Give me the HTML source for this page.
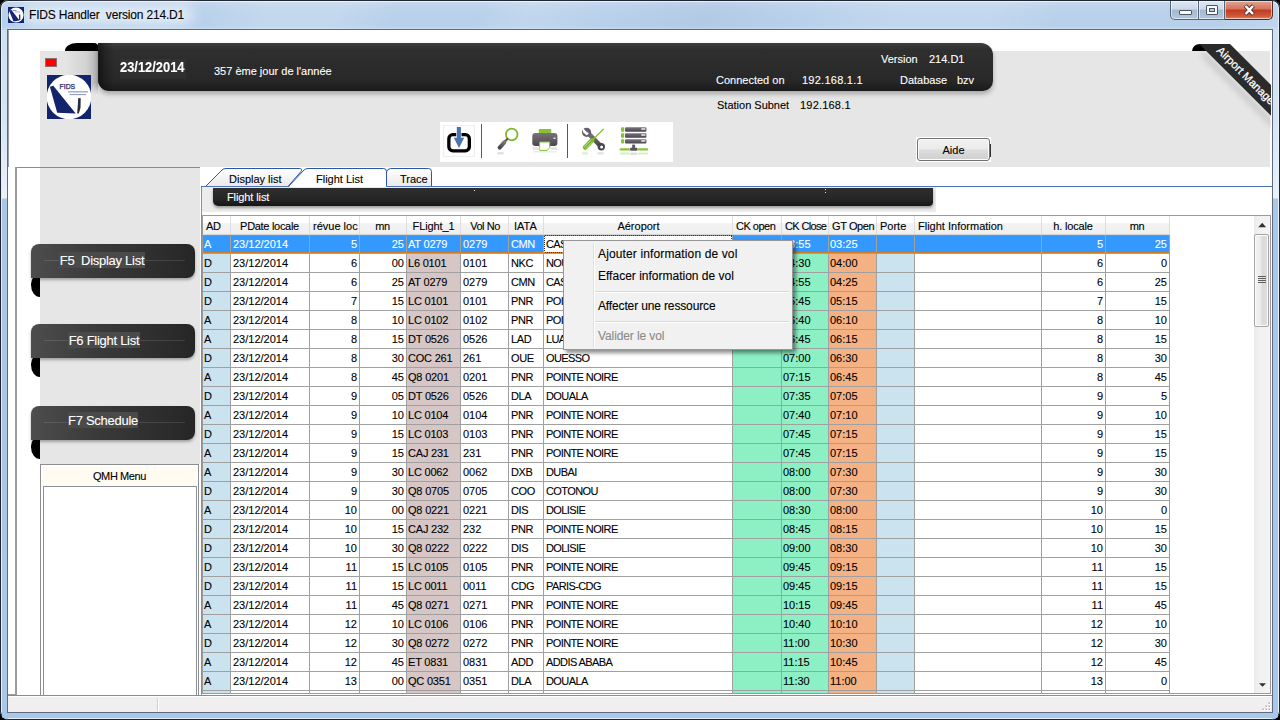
<!DOCTYPE html>
<html lang="fr">
<head>
<meta charset="utf-8">
<title>FIDS Handler version 214.D1</title>
<style>
*{box-sizing:border-box;margin:0;padding:0}
html,body{width:1280px;height:720px;overflow:hidden;background:#000}
body{font-family:"Liberation Sans",sans-serif;font-size:11px;color:#000;position:relative;-webkit-text-stroke:.1px currentColor}
.abs{position:absolute}
#frame{position:absolute;left:0;top:0;width:1280px;height:720px;border-radius:8px 8px 9px 9px;
 background:
  linear-gradient(115deg,rgba(255,255,255,0) 0,rgba(255,255,255,0) 13%,rgba(255,255,255,.16) 17%,rgba(255,255,255,.16) 21%,rgba(255,255,255,0) 25%,rgba(255,255,255,0) 30%,rgba(255,255,255,.13) 33%,rgba(255,255,255,0) 38%,rgba(0,0,40,.03) 44%,rgba(255,255,255,0) 50%,rgba(255,255,255,.14) 56%,rgba(255,255,255,.14) 62%,rgba(255,255,255,0) 66%,rgba(255,255,255,0) 76%,rgba(255,255,255,.16) 82%,rgba(255,255,255,.22) 100%),
  linear-gradient(180deg,#c9dcf0 0,#bdd4ec 6px,#b9d1ea 14px,#b7d0ea 26px,#c6daef 29px,#b9d1ea 30px);
 box-shadow:inset 0 0 0 1px #1e2630, inset 0 0 0 2px rgba(255,255,255,.6);overflow:hidden}
#frame .side{position:absolute;top:30px;bottom:1px;width:6px;background:linear-gradient(180deg,#cfe0f3 0,#d6e5f5 90px,#e9f1fa 166px,#e9f1fa 168px,#a9c8e9 169px,#a9c8e9 100%)}
#frame .bot{position:absolute;left:2px;right:2px;top:713px;height:5px;background:#a9c8e9}
#glow{position:absolute;left:22px;top:6px;width:172px;height:18px;background:#fff;opacity:.62;filter:blur(7px);border-radius:9px}
#clientborder{position:absolute;left:7px;top:29px;width:1266px;height:684px;background:#5d6b7c;border:0}
#client{position:absolute;left:8px;top:30px;width:1264px;height:682px;background:#fff;overflow:hidden}
#title{position:absolute;left:29px;top:7px;font-size:12px;letter-spacing:-.18px;line-height:16px;color:#000;white-space:pre;}
/* coordinates inside #client are page coords minus (8,30): we use a wrapper shifted */
#pg{position:absolute;left:-8px;top:-30px;width:1280px;height:720px}
.ribbon{background:linear-gradient(180deg,#3e3e3e 0,#2f2f2f 14%,#2b2b2b 50%,#282828 78%,#1a1a1a 100%);color:#fff}
.t{position:absolute;white-space:pre;line-height:13px}
.w{color:#fff}
/* grid */
#grid{position:absolute;left:202px;top:215px;width:1069px;height:479px;border:1px solid #9a9a9a;background:#fff;overflow:hidden}
.ghead{position:absolute;left:0;top:0;width:967px;height:19px;background:linear-gradient(180deg,#fff 0,#fff 36%,#f3f3f3 42%,#efefef 100%);border-bottom:1px solid #d5d5d5}
.hc{position:absolute;top:0;height:18px;line-height:21px;white-space:pre;overflow:visible;border-right:0;padding:0 2px 0 3px}
.hc.hm{text-align:center}
.hc::after{content:"";position:absolute;right:-1px;top:0;width:1px;height:18px;background:#dedede}
.gr{position:absolute;left:0;width:967px;height:19px}
.c{position:absolute;top:0;height:19px;line-height:18px;white-space:pre;overflow:hidden;padding:0 2px;box-shadow:1px 0 0 #a0a0a0,0 1px 0 #a0a0a0,1px 1px 0 #a0a0a0;height:18px}
.c.r{text-align:right;padding-right:2px}
.gr.sel .c{background:#3399ff;color:#fff}
.gr.sel .c.foc{background:#fff;color:#000}
.gr.sel::before,.gr.sel::after{content:"";position:absolute;left:0;width:966px;height:0;border-top:1px dotted #d8822a;z-index:2}
.gr.sel::before{top:0}.gr.sel::after{top:17px}
.gr.sel .c.foc{outline:1px dotted #333;outline-offset:-1px}

.lbtn{left:31px;width:164px;height:34px;border-radius:8px 8px 8px 0;background:linear-gradient(90deg,#4d4d4d 0,#3a3a3a 40%,#262626 100%);box-shadow:0 2px 3px rgba(0,0,0,.3)}
.lbtn i{position:absolute;left:13px;right:10px;top:16px;height:1px;background:rgba(255,255,255,.12)}
.lbtn span{position:absolute;top:8px;height:16px;line-height:18px;font-size:13px;letter-spacing:-.27px;color:#fff;white-space:pre;background:#4a4a4a;text-align:center;overflow:visible}
.mi{font-size:12px;line-height:15px;color:#000}

#capbtns{position:absolute;left:1170px;top:1px;width:103px;height:19px}
.cb{position:absolute;top:0;height:19px;border:1px solid #566477;border-top:0;background:linear-gradient(180deg,#dfe8f3 0,#cbd9e9 45%,#a5b9d1 50%,#b3c6dc 100%);box-shadow:inset 0 0 0 1px rgba(255,255,255,.55)}
.cb+.cb{border-left:0}
.cb b{position:absolute;background:#f8fafc;border:1px solid #4a5566;border-radius:1px}
.cb u{position:absolute;left:10px;top:7px;width:6px;height:4px;border:1px solid #4a5566;background:#b7c9de}
.cb.close{background:linear-gradient(180deg,#e3a392 0,#d3735c 45%,#c13a22 50%,#cf5b3c 85%,#dd8a6a 100%);border-color:#5a2a24}
</style>
</head>
<body>
<div id="frame">
  <div id="glow"></div><div class="side" style="left:2px"></div><div class="side" style="right:2px"></div><div class="bot"></div>
</div>
<svg class="abs" style="left:8px;top:7px" width="16" height="16" viewBox="0 0 16 16">
 <rect width="16" height="16" fill="#14247a"/><circle cx="8" cy="8" r="7.600" fill="#fff"/>
 <path d="M1 3.500 L3.500 3 L11.500 13.500 L5.500 14.500 Z" fill="#14247a"/>
 <rect x="11" y="7.500" width="1.300" height="5.500" fill="#333"/>
 <rect x="4.500" y="3" width="4" height="1" fill="#8a90bc"/><rect x="7" y="4.500" width="5" height="1" fill="#aab0d0"/>
</svg>
<div id="title">FIDS Handler  version 214.D1</div>
<div id="capbtns">
 <div class="cb" style="left:0;width:29px;border-radius:0 0 0 5px"><b style="left:8px;top:9px;width:13px;height:5px"></b></div>
 <div class="cb" style="left:29px;width:26px"><b style="left:7px;top:4px;width:12px;height:10px"></b><u></u></div>
 <div class="cb close" style="left:55px;width:48px;border-radius:0 0 5px 0">
  <svg width="46" height="18" viewBox="0 0 46 18" style="position:absolute;left:1px;top:0"><g stroke-linecap="butt"><path d="M19.300 4.600 L27.300 13.400 M27.300 4.600 L19.300 13.400" stroke="#4e3030" stroke-width="4.200" fill="none"/><path d="M19.600 5 L27 13 M27 5 L19.600 13" stroke="#fff" stroke-width="2.500" fill="none"/></g></svg>
 </div>
</div>
<div id="clientborder"></div>
<div id="client"><div id="pg">
<!-- thin left edge line -->
<div class="abs" style="left:8px;top:30px;width:1px;height:137px;background:#9aa0a8"></div>
<!-- header gray panel -->
<div class="abs" style="left:40px;top:51px;width:1230px;height:116px;background:#e6e6e6"></div>
<div class="abs" style="left:40px;top:51px;width:58px;height:44px;background:linear-gradient(90deg,#e6e6e6 0,#e4e4e4 45%,#d2d2d2 80%,#b0b0b0 100%);-webkit-mask-image:linear-gradient(180deg,#000 0,#000 72%,transparent 100%);mask-image:linear-gradient(180deg,#000 0,#000 72%,transparent 100%)"></div>
<!-- left column gray -->
<div class="abs" style="left:40px;top:167px;width:160px;height:297px;background:#e6e6e6"></div>
<!-- left panel frame lines -->
<div class="abs" style="left:15px;top:167px;width:186px;height:1px;background:#8c8c8c"></div>
<div class="abs" style="left:15px;top:167px;width:2px;height:528px;background:#9c9c9c"></div>
<div class="abs" style="left:8px;top:694px;width:8px;height:1px;background:#9c9c9c"></div>

<!-- main ribbon fold -->
<div class="abs" style="left:65px;top:43px;width:34px;height:8px;background:#000;border-radius:12px 5px 0 0 / 8px 5px 0 0"></div>
<!-- main ribbon -->
<div class="abs ribbon" style="left:98px;top:43px;width:895px;height:48px;border-radius:0 12px 10px 11px;box-shadow:0 3px 5px rgba(0,0,0,.28), inset 1px 0 0 rgba(255,255,255,.06)"></div>
<div class="abs" style="left:98px;top:43px;width:16px;height:48px;border-radius:0 0 0 11px;background:linear-gradient(90deg,rgba(0,0,0,.55) 0,rgba(0,0,0,.25) 40%,rgba(0,0,0,0) 100%)"></div>
<div class="abs" style="left:120px;top:59px;width:66px;height:20px;background:rgba(255,255,255,.03)"></div>
<div class="t w" id="tdate" style="left:120px;top:59px;font-size:14px;font-weight:bold;line-height:16px;transform-origin:0 0;transform:scaleX(.92)">23/12/2014</div>
<div class="t w" id="tday" style="left:214px;top:65px;font-size:11px">357 ème jour de l'année</div>
<div class="t w" id="tver" style="left:881px;top:53px">Version</div>
<div class="t w" id="tvern" style="left:929px;top:53px">214.D1</div>
<div class="t w" id="tcon" style="left:716px;top:74px">Connected on</div>
<div class="t w" id="tip" style="letter-spacing:.25px;left:802px;top:74px">192.168.1.1</div>
<div class="t w" id="tdb" style="left:900px;top:74px">Database</div>
<div class="t w" id="tbzv" style="left:957px;top:74px">bzv</div>
<div class="t" id="tsub" style="left:717px;top:99px">Station Subnet</div>
<div class="t" id="tsubn" style="letter-spacing:.2px;left:800px;top:99px">192.168.1</div>

<!-- red indicator -->
<div class="abs" style="left:45px;top:58px;width:12px;height:9px;background:#ff0000;border:1px solid #8a7070"></div>
<!-- logo -->
<svg class="abs" style="left:47px;top:75px" width="44" height="44" viewBox="0 0 44 44">
 <rect width="44" height="44" fill="#12246b"/>
 <circle cx="22" cy="22" r="22.300" fill="#fff"/>
 <path d="M2.900 11.700 L6.300 10.700 L28.700 38.600 L10.200 37.700 Z" fill="#12246b"/>
 <path d="M31.300 23 L33.700 23.200 L33.500 33 L31.800 38.400 L30.200 38.400 Z" fill="#262c3c"/>
 <text x="12.600" y="13.800" font-family="Liberation Sans,sans-serif" font-size="7" fill="#12246b" stroke="#12246b" stroke-width=".25" textLength="15.600" lengthAdjust="spacingAndGlyphs">FIDS</text>
 <rect x="21" y="16.300" width="20" height="1.100" fill="#12246b" opacity=".5"/>
 <rect x="22.500" y="19" width="16.500" height="1.100" fill="#12246b" opacity=".45"/>
</svg>

<!-- Airport Manager corner ribbon -->
<svg class="abs" style="left:1180px;top:36px" width="91" height="140" viewBox="1180 36 91 140">
 <defs>
  <linearGradient id="amg" x1="0" y1="1" x2="1" y2="0">
   <stop offset="0" stop-color="#242424"/><stop offset=".45" stop-color="#2c2c2c"/><stop offset=".55" stop-color="#3a3a3a"/><stop offset="1" stop-color="#2a2a2a"/>
  </linearGradient>
  <filter id="ams" x="-30%" y="-30%" width="160%" height="160%"><feGaussianBlur stdDeviation="3"/></filter>
 </defs>
 <polygon points="1204,52 1280,128 1280,134 1201,55" fill="#000" opacity=".17" filter="url(#ams)"/>
 <path d="M1192 51 Q1193 44 1200 44 L1214 44 L1207 51 Z" fill="#000"/>
 <polygon points="1199.200,44 1230,44 1280,94 1280,124.800" fill="#2b2b2b"/>
 <text transform="translate(1216.100,51.300) rotate(45)" font-family="Liberation Sans,sans-serif" font-size="11.200" fill="#fff" stroke="#fff" stroke-width=".25">Airport Manager</text>
</svg>

<!-- toolbar -->
<div class="abs" style="left:440px;top:122px;width:233px;height:40px;background:#fff"></div>
<div class="abs" style="left:443px;top:125px;width:32px;height:32px;background:#fdfdfd;border:1px solid #eeeeee"></div>
<svg class="abs" style="left:440px;top:122px" width="233" height="40" viewBox="0 0 233 40">
 <defs>
  <linearGradient id="gg" x1="0" y1="0" x2="0" y2="1"><stop offset="0" stop-color="#7a737b"/><stop offset="1" stop-color="#4a454d"/></linearGradient>
  <linearGradient id="gf" x1="0" y1="0" x2="0" y2="1"><stop offset="0" stop-color="#8b858d"/><stop offset="1" stop-color="#5a555d"/></linearGradient>
 </defs>
 <!-- import icon -->
 <rect x="8.850" y="12.650" width="20.500" height="16.200" rx="4" fill="none" stroke="#000" stroke-width="3.300"/>
 <path d="M16.200 4.800 H21.500 V15.300 H24.800 L19 26.600 L13.200 15.300 H16.200 Z" fill="#fff"/>
 <path d="M16.800 5.100 H20.900 V15.800 H24.200 L19 26 L13.800 15.800 H16.800 Z" fill="#4a74ab"/>
 <!-- separators -->
 <rect x="41" y="2" width="1" height="34" fill="#5a5a5a"/>
 <rect x="127" y="2" width="1" height="34" fill="#5a5a5a"/>
 <!-- magnifier -->
 <circle cx="71.700" cy="12.500" r="5.800" fill="#fff" stroke="#7cb82f" stroke-width="1.800"/>
 <path d="M67.300 17 L63.500 21" stroke="#5a555d" stroke-width="2.200" stroke-linecap="round"/>
 <path d="M64.300 20.300 L59.600 25.600" stroke="url(#gg)" stroke-width="4" stroke-linecap="round"/>
 <ellipse cx="60.500" cy="31.300" rx="3.500" ry="1.200" fill="#e2e0e3"/>
 <!-- printer -->
 <rect x="98.800" y="7" width="12.500" height="5" rx="1" fill="#86c232"/>
 <rect x="92.300" y="11" width="25.100" height="13" rx="3" fill="url(#gg)"/>
 <path d="M99.600 20 H109.700 V25.800 L107 28.400 H99.600 Z" fill="#fff" stroke="#86c232" stroke-width="1"/>
 <rect x="113.500" y="15.500" width="2" height="1.500" fill="#e4e2e5"/>
 <rect x="92.500" y="25" width="7" height="3" fill="#e6e4e7"/><rect x="110.300" y="25" width="7" height="3" fill="#e6e4e7"/>
 <rect x="93" y="29" width="24" height="1.500" fill="#ecebed"/>
 <!-- tools -->
 <path d="M149 12 L160.500 23.800" stroke="url(#gg)" stroke-width="4.600" stroke-linecap="round"/>
 <circle cx="146.600" cy="10.300" r="4.600" fill="#66606a"/>
 <path d="M142.200 5.500 L148.600 11.700 L146.400 13.300 L143.300 10.200 Z" fill="#fff"/>
 <circle cx="147.400" cy="11.600" r="1" fill="#fff"/>
 <circle cx="161.300" cy="24.700" r="3.700" fill="#4a454d"/><circle cx="161.600" cy="24.900" r="1.500" fill="#fff"/>
 <path d="M163.300 7.200 L152.500 18" stroke="#86c232" stroke-width="1.300" stroke-linecap="round"/>
 <circle cx="152.300" cy="18.200" r="2.200" fill="#7cb82f"/>
 <path d="M151.500 19 L145.200 25.400" stroke="#7cb82f" stroke-width="4.800" stroke-linecap="round"/>
 <path d="M150.600 18.500 L144.300 24.800 M152.300 20.200 L146 26.500" stroke="#d5ecaf" stroke-width=".7"/>
 <ellipse cx="145" cy="31.300" rx="3.500" ry="1.300" fill="#e3f0cf"/><ellipse cx="160.500" cy="31.300" rx="3.500" ry="1.300" fill="#e4e2e5"/>
 <!-- server -->
 <rect x="185" y="5.300" width="21.400" height="4.400" rx="1" fill="url(#gg)"/>
 <rect x="185" y="11.300" width="21.400" height="4.400" rx="1" fill="url(#gg)"/>
 <rect x="185" y="17.200" width="21.400" height="4.400" rx="1" fill="url(#gg)"/>
 <rect x="181" y="5.300" width="3.200" height="4.400" rx="1" fill="#86c232"/><rect x="181" y="11.300" width="3.200" height="4.400" rx="1" fill="#86c232"/><rect x="181" y="17.200" width="3.200" height="4.400" rx="1" fill="#86c232"/>
 <rect x="201.300" y="6.200" width="4" height="1.600" fill="#e4e2e5"/><rect x="201.300" y="12.200" width="4" height="1.600" fill="#e4e2e5"/><rect x="201.300" y="18.100" width="4" height="1.600" fill="#e4e2e5"/>
 <rect x="192.200" y="22.600" width="2.900" height="4" fill="#5a555d"/>
 <rect x="190.100" y="25.800" width="7.400" height="3" rx=".8" fill="#5a555d"/>
 <rect x="179.600" y="26.200" width="10.300" height="2.400" rx="1.200" fill="#86c232"/><rect x="197.800" y="26.200" width="10.300" height="2.400" rx="1.200" fill="#86c232"/>
 <rect x="179.600" y="30.400" width="10.300" height="2" rx="1" fill="#dcedc2"/><rect x="197.800" y="30.400" width="10.300" height="2" rx="1" fill="#dcedc2"/><rect x="190.100" y="30.400" width="7.400" height="2.600" rx="1" fill="#e0dee2"/>
</svg>

<!-- Aide button -->
<div class="abs" style="left:916px;top:137px;width:75px;height:25px;background:#fff"></div>
<div class="abs" style="left:917px;top:138px;width:73px;height:23px;border:1px solid #707070;border-radius:3px;background:linear-gradient(180deg,#f2f2f2 0,#ebebeb 48%,#dddddd 52%,#cfcfcf 100%);box-shadow:inset 0 0 0 1px #fcfcfc;text-align:center;line-height:23px;font-size:11px">Aide</div>
<div class="abs" style="left:990px;top:144px;width:1px;height:13px;background:#333"></div>

<!-- left buttons -->
<div class="abs" style="left:31px;top:274px;width:9px;height:23px;background:#000;border-radius:9px 0 0 9px / 10px 0 0 12px"></div>
<div class="abs" style="left:31px;top:354px;width:9px;height:23px;background:#000;border-radius:9px 0 0 9px / 10px 0 0 12px"></div>
<div class="abs" style="left:31px;top:436px;width:9px;height:23px;background:#000;border-radius:9px 0 0 9px / 10px 0 0 12px"></div>
<div class="abs lbtn" style="top:244px"><i></i><span style="left:28px;width:86px">F5  Display List</span></div>
<div class="abs lbtn" style="top:324px"><i></i><span style="left:37px;width:72px">F6 Flight List</span></div>
<div class="abs lbtn" style="top:406px"><i></i><span style="left:37px;width:70px;top:6px">F7 Schedule</span></div>

<!-- QMH menu -->
<div class="abs" style="left:40px;top:464px;width:159px;height:231px;background:#fffbf0;border:1px solid #8e8e8e;border-bottom:0;box-shadow:inset 2px 2px 0 #fff, inset -2px 0 0 #fff"></div>
<div class="t" id="tqmh" style="left:40px;top:470px;width:159px;text-align:center;font-size:11px;letter-spacing:-.4px">QMH Menu</div>
<div class="abs" style="left:43px;top:486px;width:154px;height:209px;background:#fff;border:1px solid #8a909c;border-bottom:0"></div>

<!-- tabs -->
<svg class="abs" style="left:200px;top:166px" width="1072" height="24" viewBox="200 166 1072 24">
 <defs><linearGradient id="tg" x1="0" y1="0" x2="0" y2="1"><stop offset="0" stop-color="#ffffff"/><stop offset="1" stop-color="#e9e9e9"/></linearGradient></defs>
 <rect x="200" y="167" width="1072" height="20" fill="#fff"/>
 <path d="M205.500 186.500 L222 170 Q223.500 168.500 226 168.500 L299 168.500 Q303 168.500 301 171.500 L288 186.500 Z" fill="url(#tg)" stroke="#2a56b0" stroke-width="1"/>
 <path d="M386.500 186.500 L386.500 172 Q387 169 390.500 168.500 L428.500 168.500 Q431.500 168.500 431.500 171.500 L431.500 186.500 Z" fill="url(#tg)" stroke="#2a56b0" stroke-width="1"/>
 <rect x="201" y="186" width="1071" height="1" fill="#4f74b8"/>
 <path d="M288.500 187.500 L304 170 Q305.500 168.500 308 168.500 L383.500 168.500 Q386.500 168.500 386.500 171.500 L386.500 187.500 Z" fill="#fff"/>
 <path d="M288.500 186.500 L304 170 Q305.500 168.500 308 168.500 L383.500 168.500 Q386.500 168.500 386.500 171.500 L386.500 186.500" fill="none" stroke="#2a56b0" stroke-width="1"/>
</svg>
<div class="t" id="ttab1" style="left:229px;top:172px;font-size:11px;line-height:14px">Display list</div>
<div class="t" id="ttab2" style="left:316px;top:172px;font-size:11px;line-height:14px">Flight List</div>
<div class="t" id="ttab3" style="left:400px;top:172px;font-size:11px;line-height:14px">Trace</div>
<!-- tab page -->
<div class="abs" style="left:201px;top:187px;width:1px;height:508px;background:#8e8e8e"></div>
<div class="abs" style="left:202px;top:187px;width:734px;height:25px;background:#ececec"></div>
<div class="abs ribbon" style="left:213px;top:188px;width:720px;height:18px;border-radius:0 0 4px 5px;background:linear-gradient(180deg,#2e2e2e 0,#262626 60%,#161616 100%);box-shadow:0 2px 3px rgba(0,0,0,.35)"></div>
<div class="t w" id="tfl" style="left:227px;letter-spacing:-.1px;top:190px;font-size:11px;line-height:14px">Flight list</div>
<div class="abs" style="left:474px;top:190px;width:1px;height:1px;background:#ddd"></div>
<div class="abs" style="left:825px;top:189px;width:1px;height:1px;background:#ddd"></div><div class="abs" style="left:825px;top:192px;width:1px;height:1px;background:#ddd"></div>

<div id="grid">
<div class="ghead">
<div class="hc hl" style="left:0px;width:27px;letter-spacing:-0.30px;">AD</div>
<div class="hc hm" style="left:28px;width:78px;letter-spacing:-0.30px;padding-right:4.0px;">PDate locale</div>
<div class="hc hm" style="left:107px;width:49px;">révue loc</div>
<div class="hc hm" style="left:157px;width:46px;letter-spacing:-0.30px;padding-right:4.0px;">mn</div>
<div class="hc hm" style="left:204px;width:53px;letter-spacing:-0.12px;padding-right:3.0px;">FLight_1</div>
<div class="hc hm" style="left:258px;width:47px;letter-spacing:-0.45px;">Vol No</div>
<div class="hc hl" style="left:306px;width:34px;padding-left:5px;">IATA</div>
<div class="hc hm" style="left:341px;width:188px;">Aéroport</div>
<div class="hc hm" style="left:530px;width:48px;letter-spacing:-0.50px;padding-right:6.0px;">CK open</div>
<div class="hc hm" style="left:579px;width:46px;letter-spacing:-0.65px;">CK Close</div>
<div class="hc hm" style="left:626px;width:47px;letter-spacing:-0.40px;padding-right:3.4px;">GT Open</div>
<div class="hc hl" style="left:674px;width:37px;">Porte</div>
<div class="hc hl" style="left:712px;width:126px;">Flight Information</div>
<div class="hc hm" style="left:839px;width:63px;letter-spacing:-0.15px;padding-right:4.0px;">h. locale</div>
<div class="hc hm" style="left:903px;width:63px;letter-spacing:-0.30px;padding-right:4.0px;">mn</div>
</div>
<div class="gr sel" style="top:19px">
<div class="c l" style="left:0px;width:27px;padding-left:1px;">A</div>
<div class="c l" style="left:28px;width:78px;">23/12/2014</div>
<div class="c r" style="left:107px;width:49px;">5</div>
<div class="c r" style="left:157px;width:46px;">25</div>
<div class="c l" style="left:204px;width:53px;letter-spacing:-0.2px;padding-left:1px;">AT 0279</div>
<div class="c l" style="left:258px;width:47px;">0279</div>
<div class="c l" style="left:306px;width:34px;letter-spacing:-0.4px;">CMN</div>
<div class="c l foc" style="left:341px;width:188px;letter-spacing:-0.6px;">CASABLANCA</div>
<div class="c l" style="left:530px;width:48px;"></div>
<div class="c l" style="left:579px;width:46px;padding-left:1px;">03:55</div>
<div class="c l" style="left:626px;width:47px;padding-left:1px;">03:25</div>
<div class="c l" style="left:674px;width:37px;"></div>
<div class="c l" style="left:712px;width:126px;"></div>
<div class="c r" style="left:839px;width:63px;">5</div>
<div class="c r" style="left:903px;width:63px;">25</div>
</div>
<div class="gr" style="top:38px">
<div class="c l" style="left:0px;width:27px;padding-left:1px;background:#cbe3ee;">D</div>
<div class="c l" style="left:28px;width:78px;">23/12/2014</div>
<div class="c r" style="left:107px;width:49px;">6</div>
<div class="c r" style="left:157px;width:46px;">00</div>
<div class="c l" style="left:204px;width:53px;letter-spacing:-0.2px;padding-left:1px;background:#d6c6c6;">L6 0101</div>
<div class="c l" style="left:258px;width:47px;">0101</div>
<div class="c l" style="left:306px;width:34px;letter-spacing:-0.4px;">NKC</div>
<div class="c l" style="left:341px;width:188px;letter-spacing:-0.6px;">NOUAKCHOTT</div>
<div class="c l" style="left:530px;width:48px;background:#8df0c5;"></div>
<div class="c l" style="left:579px;width:46px;padding-left:1px;background:#8df0c5;">04:30</div>
<div class="c l" style="left:626px;width:47px;padding-left:1px;background:#f4b183;">04:00</div>
<div class="c l" style="left:674px;width:37px;background:#cbe3ee;"></div>
<div class="c l" style="left:712px;width:126px;"></div>
<div class="c r" style="left:839px;width:63px;">6</div>
<div class="c r" style="left:903px;width:63px;">0</div>
</div>
<div class="gr" style="top:57px">
<div class="c l" style="left:0px;width:27px;padding-left:1px;background:#cbe3ee;">D</div>
<div class="c l" style="left:28px;width:78px;">23/12/2014</div>
<div class="c r" style="left:107px;width:49px;">6</div>
<div class="c r" style="left:157px;width:46px;">25</div>
<div class="c l" style="left:204px;width:53px;letter-spacing:-0.2px;padding-left:1px;background:#d6c6c6;">AT 0279</div>
<div class="c l" style="left:258px;width:47px;">0279</div>
<div class="c l" style="left:306px;width:34px;letter-spacing:-0.4px;">CMN</div>
<div class="c l" style="left:341px;width:188px;letter-spacing:-0.6px;">CASABLANCA</div>
<div class="c l" style="left:530px;width:48px;background:#8df0c5;"></div>
<div class="c l" style="left:579px;width:46px;padding-left:1px;background:#8df0c5;">04:55</div>
<div class="c l" style="left:626px;width:47px;padding-left:1px;background:#f4b183;">04:25</div>
<div class="c l" style="left:674px;width:37px;background:#cbe3ee;"></div>
<div class="c l" style="left:712px;width:126px;"></div>
<div class="c r" style="left:839px;width:63px;">6</div>
<div class="c r" style="left:903px;width:63px;">25</div>
</div>
<div class="gr" style="top:76px">
<div class="c l" style="left:0px;width:27px;padding-left:1px;background:#cbe3ee;">D</div>
<div class="c l" style="left:28px;width:78px;">23/12/2014</div>
<div class="c r" style="left:107px;width:49px;">7</div>
<div class="c r" style="left:157px;width:46px;">15</div>
<div class="c l" style="left:204px;width:53px;letter-spacing:-0.2px;padding-left:1px;background:#d6c6c6;">LC 0101</div>
<div class="c l" style="left:258px;width:47px;">0101</div>
<div class="c l" style="left:306px;width:34px;letter-spacing:-0.4px;">PNR</div>
<div class="c l" style="left:341px;width:188px;letter-spacing:-0.6px;">POINTE NOIRE</div>
<div class="c l" style="left:530px;width:48px;background:#8df0c5;"></div>
<div class="c l" style="left:579px;width:46px;padding-left:1px;background:#8df0c5;">05:45</div>
<div class="c l" style="left:626px;width:47px;padding-left:1px;background:#f4b183;">05:15</div>
<div class="c l" style="left:674px;width:37px;background:#cbe3ee;"></div>
<div class="c l" style="left:712px;width:126px;"></div>
<div class="c r" style="left:839px;width:63px;">7</div>
<div class="c r" style="left:903px;width:63px;">15</div>
</div>
<div class="gr" style="top:95px">
<div class="c l" style="left:0px;width:27px;padding-left:1px;background:#cbe3ee;">A</div>
<div class="c l" style="left:28px;width:78px;">23/12/2014</div>
<div class="c r" style="left:107px;width:49px;">8</div>
<div class="c r" style="left:157px;width:46px;">10</div>
<div class="c l" style="left:204px;width:53px;letter-spacing:-0.2px;padding-left:1px;background:#d6c6c6;">LC 0102</div>
<div class="c l" style="left:258px;width:47px;">0102</div>
<div class="c l" style="left:306px;width:34px;letter-spacing:-0.4px;">PNR</div>
<div class="c l" style="left:341px;width:188px;letter-spacing:-0.6px;">POINTE NOIRE</div>
<div class="c l" style="left:530px;width:48px;background:#8df0c5;"></div>
<div class="c l" style="left:579px;width:46px;padding-left:1px;background:#8df0c5;">06:40</div>
<div class="c l" style="left:626px;width:47px;padding-left:1px;background:#f4b183;">06:10</div>
<div class="c l" style="left:674px;width:37px;background:#cbe3ee;"></div>
<div class="c l" style="left:712px;width:126px;"></div>
<div class="c r" style="left:839px;width:63px;">8</div>
<div class="c r" style="left:903px;width:63px;">10</div>
</div>
<div class="gr" style="top:114px">
<div class="c l" style="left:0px;width:27px;padding-left:1px;background:#cbe3ee;">A</div>
<div class="c l" style="left:28px;width:78px;">23/12/2014</div>
<div class="c r" style="left:107px;width:49px;">8</div>
<div class="c r" style="left:157px;width:46px;">15</div>
<div class="c l" style="left:204px;width:53px;letter-spacing:-0.2px;padding-left:1px;background:#d6c6c6;">DT 0526</div>
<div class="c l" style="left:258px;width:47px;">0526</div>
<div class="c l" style="left:306px;width:34px;letter-spacing:-0.4px;">LAD</div>
<div class="c l" style="left:341px;width:188px;letter-spacing:-0.6px;">LUANDA</div>
<div class="c l" style="left:530px;width:48px;background:#8df0c5;"></div>
<div class="c l" style="left:579px;width:46px;padding-left:1px;background:#8df0c5;">06:45</div>
<div class="c l" style="left:626px;width:47px;padding-left:1px;background:#f4b183;">06:15</div>
<div class="c l" style="left:674px;width:37px;background:#cbe3ee;"></div>
<div class="c l" style="left:712px;width:126px;"></div>
<div class="c r" style="left:839px;width:63px;">8</div>
<div class="c r" style="left:903px;width:63px;">15</div>
</div>
<div class="gr" style="top:133px">
<div class="c l" style="left:0px;width:27px;padding-left:1px;background:#cbe3ee;">D</div>
<div class="c l" style="left:28px;width:78px;">23/12/2014</div>
<div class="c r" style="left:107px;width:49px;">8</div>
<div class="c r" style="left:157px;width:46px;">30</div>
<div class="c l" style="left:204px;width:53px;letter-spacing:-0.2px;padding-left:1px;background:#d6c6c6;">COC 261</div>
<div class="c l" style="left:258px;width:47px;">261</div>
<div class="c l" style="left:306px;width:34px;letter-spacing:-0.4px;">OUE</div>
<div class="c l" style="left:341px;width:188px;letter-spacing:-0.6px;">OUESSO</div>
<div class="c l" style="left:530px;width:48px;background:#8df0c5;"></div>
<div class="c l" style="left:579px;width:46px;padding-left:1px;background:#8df0c5;">07:00</div>
<div class="c l" style="left:626px;width:47px;padding-left:1px;background:#f4b183;">06:30</div>
<div class="c l" style="left:674px;width:37px;background:#cbe3ee;"></div>
<div class="c l" style="left:712px;width:126px;"></div>
<div class="c r" style="left:839px;width:63px;">8</div>
<div class="c r" style="left:903px;width:63px;">30</div>
</div>
<div class="gr" style="top:152px">
<div class="c l" style="left:0px;width:27px;padding-left:1px;background:#cbe3ee;">A</div>
<div class="c l" style="left:28px;width:78px;">23/12/2014</div>
<div class="c r" style="left:107px;width:49px;">8</div>
<div class="c r" style="left:157px;width:46px;">45</div>
<div class="c l" style="left:204px;width:53px;letter-spacing:-0.2px;padding-left:1px;background:#d6c6c6;">Q8 0201</div>
<div class="c l" style="left:258px;width:47px;">0201</div>
<div class="c l" style="left:306px;width:34px;letter-spacing:-0.4px;">PNR</div>
<div class="c l" style="left:341px;width:188px;letter-spacing:-0.6px;">POINTE NOIRE</div>
<div class="c l" style="left:530px;width:48px;background:#8df0c5;"></div>
<div class="c l" style="left:579px;width:46px;padding-left:1px;background:#8df0c5;">07:15</div>
<div class="c l" style="left:626px;width:47px;padding-left:1px;background:#f4b183;">06:45</div>
<div class="c l" style="left:674px;width:37px;background:#cbe3ee;"></div>
<div class="c l" style="left:712px;width:126px;"></div>
<div class="c r" style="left:839px;width:63px;">8</div>
<div class="c r" style="left:903px;width:63px;">45</div>
</div>
<div class="gr" style="top:171px">
<div class="c l" style="left:0px;width:27px;padding-left:1px;background:#cbe3ee;">D</div>
<div class="c l" style="left:28px;width:78px;">23/12/2014</div>
<div class="c r" style="left:107px;width:49px;">9</div>
<div class="c r" style="left:157px;width:46px;">05</div>
<div class="c l" style="left:204px;width:53px;letter-spacing:-0.2px;padding-left:1px;background:#d6c6c6;">DT 0526</div>
<div class="c l" style="left:258px;width:47px;">0526</div>
<div class="c l" style="left:306px;width:34px;letter-spacing:-0.4px;">DLA</div>
<div class="c l" style="left:341px;width:188px;letter-spacing:-0.6px;">DOUALA</div>
<div class="c l" style="left:530px;width:48px;background:#8df0c5;"></div>
<div class="c l" style="left:579px;width:46px;padding-left:1px;background:#8df0c5;">07:35</div>
<div class="c l" style="left:626px;width:47px;padding-left:1px;background:#f4b183;">07:05</div>
<div class="c l" style="left:674px;width:37px;background:#cbe3ee;"></div>
<div class="c l" style="left:712px;width:126px;"></div>
<div class="c r" style="left:839px;width:63px;">9</div>
<div class="c r" style="left:903px;width:63px;">5</div>
</div>
<div class="gr" style="top:190px">
<div class="c l" style="left:0px;width:27px;padding-left:1px;background:#cbe3ee;">A</div>
<div class="c l" style="left:28px;width:78px;">23/12/2014</div>
<div class="c r" style="left:107px;width:49px;">9</div>
<div class="c r" style="left:157px;width:46px;">10</div>
<div class="c l" style="left:204px;width:53px;letter-spacing:-0.2px;padding-left:1px;background:#d6c6c6;">LC 0104</div>
<div class="c l" style="left:258px;width:47px;">0104</div>
<div class="c l" style="left:306px;width:34px;letter-spacing:-0.4px;">PNR</div>
<div class="c l" style="left:341px;width:188px;letter-spacing:-0.6px;">POINTE NOIRE</div>
<div class="c l" style="left:530px;width:48px;background:#8df0c5;"></div>
<div class="c l" style="left:579px;width:46px;padding-left:1px;background:#8df0c5;">07:40</div>
<div class="c l" style="left:626px;width:47px;padding-left:1px;background:#f4b183;">07:10</div>
<div class="c l" style="left:674px;width:37px;background:#cbe3ee;"></div>
<div class="c l" style="left:712px;width:126px;"></div>
<div class="c r" style="left:839px;width:63px;">9</div>
<div class="c r" style="left:903px;width:63px;">10</div>
</div>
<div class="gr" style="top:209px">
<div class="c l" style="left:0px;width:27px;padding-left:1px;background:#cbe3ee;">D</div>
<div class="c l" style="left:28px;width:78px;">23/12/2014</div>
<div class="c r" style="left:107px;width:49px;">9</div>
<div class="c r" style="left:157px;width:46px;">15</div>
<div class="c l" style="left:204px;width:53px;letter-spacing:-0.2px;padding-left:1px;background:#d6c6c6;">LC 0103</div>
<div class="c l" style="left:258px;width:47px;">0103</div>
<div class="c l" style="left:306px;width:34px;letter-spacing:-0.4px;">PNR</div>
<div class="c l" style="left:341px;width:188px;letter-spacing:-0.6px;">POINTE NOIRE</div>
<div class="c l" style="left:530px;width:48px;background:#8df0c5;"></div>
<div class="c l" style="left:579px;width:46px;padding-left:1px;background:#8df0c5;">07:45</div>
<div class="c l" style="left:626px;width:47px;padding-left:1px;background:#f4b183;">07:15</div>
<div class="c l" style="left:674px;width:37px;background:#cbe3ee;"></div>
<div class="c l" style="left:712px;width:126px;"></div>
<div class="c r" style="left:839px;width:63px;">9</div>
<div class="c r" style="left:903px;width:63px;">15</div>
</div>
<div class="gr" style="top:228px">
<div class="c l" style="left:0px;width:27px;padding-left:1px;background:#cbe3ee;">A</div>
<div class="c l" style="left:28px;width:78px;">23/12/2014</div>
<div class="c r" style="left:107px;width:49px;">9</div>
<div class="c r" style="left:157px;width:46px;">15</div>
<div class="c l" style="left:204px;width:53px;letter-spacing:-0.2px;padding-left:1px;background:#d6c6c6;">CAJ 231</div>
<div class="c l" style="left:258px;width:47px;">231</div>
<div class="c l" style="left:306px;width:34px;letter-spacing:-0.4px;">PNR</div>
<div class="c l" style="left:341px;width:188px;letter-spacing:-0.6px;">POINTE NOIRE</div>
<div class="c l" style="left:530px;width:48px;background:#8df0c5;"></div>
<div class="c l" style="left:579px;width:46px;padding-left:1px;background:#8df0c5;">07:45</div>
<div class="c l" style="left:626px;width:47px;padding-left:1px;background:#f4b183;">07:15</div>
<div class="c l" style="left:674px;width:37px;background:#cbe3ee;"></div>
<div class="c l" style="left:712px;width:126px;"></div>
<div class="c r" style="left:839px;width:63px;">9</div>
<div class="c r" style="left:903px;width:63px;">15</div>
</div>
<div class="gr" style="top:247px">
<div class="c l" style="left:0px;width:27px;padding-left:1px;background:#cbe3ee;">A</div>
<div class="c l" style="left:28px;width:78px;">23/12/2014</div>
<div class="c r" style="left:107px;width:49px;">9</div>
<div class="c r" style="left:157px;width:46px;">30</div>
<div class="c l" style="left:204px;width:53px;letter-spacing:-0.2px;padding-left:1px;background:#d6c6c6;">LC 0062</div>
<div class="c l" style="left:258px;width:47px;">0062</div>
<div class="c l" style="left:306px;width:34px;letter-spacing:-0.4px;">DXB</div>
<div class="c l" style="left:341px;width:188px;letter-spacing:-0.6px;">DUBAI</div>
<div class="c l" style="left:530px;width:48px;background:#8df0c5;"></div>
<div class="c l" style="left:579px;width:46px;padding-left:1px;background:#8df0c5;">08:00</div>
<div class="c l" style="left:626px;width:47px;padding-left:1px;background:#f4b183;">07:30</div>
<div class="c l" style="left:674px;width:37px;background:#cbe3ee;"></div>
<div class="c l" style="left:712px;width:126px;"></div>
<div class="c r" style="left:839px;width:63px;">9</div>
<div class="c r" style="left:903px;width:63px;">30</div>
</div>
<div class="gr" style="top:266px">
<div class="c l" style="left:0px;width:27px;padding-left:1px;background:#cbe3ee;">D</div>
<div class="c l" style="left:28px;width:78px;">23/12/2014</div>
<div class="c r" style="left:107px;width:49px;">9</div>
<div class="c r" style="left:157px;width:46px;">30</div>
<div class="c l" style="left:204px;width:53px;letter-spacing:-0.2px;padding-left:1px;background:#d6c6c6;">Q8 0705</div>
<div class="c l" style="left:258px;width:47px;">0705</div>
<div class="c l" style="left:306px;width:34px;letter-spacing:-0.4px;">COO</div>
<div class="c l" style="left:341px;width:188px;letter-spacing:-0.6px;">COTONOU</div>
<div class="c l" style="left:530px;width:48px;background:#8df0c5;"></div>
<div class="c l" style="left:579px;width:46px;padding-left:1px;background:#8df0c5;">08:00</div>
<div class="c l" style="left:626px;width:47px;padding-left:1px;background:#f4b183;">07:30</div>
<div class="c l" style="left:674px;width:37px;background:#cbe3ee;"></div>
<div class="c l" style="left:712px;width:126px;"></div>
<div class="c r" style="left:839px;width:63px;">9</div>
<div class="c r" style="left:903px;width:63px;">30</div>
</div>
<div class="gr" style="top:285px">
<div class="c l" style="left:0px;width:27px;padding-left:1px;background:#cbe3ee;">A</div>
<div class="c l" style="left:28px;width:78px;">23/12/2014</div>
<div class="c r" style="left:107px;width:49px;">10</div>
<div class="c r" style="left:157px;width:46px;">00</div>
<div class="c l" style="left:204px;width:53px;letter-spacing:-0.2px;padding-left:1px;background:#d6c6c6;">Q8 0221</div>
<div class="c l" style="left:258px;width:47px;">0221</div>
<div class="c l" style="left:306px;width:34px;letter-spacing:-0.4px;">DIS</div>
<div class="c l" style="left:341px;width:188px;letter-spacing:-0.6px;">DOLISIE</div>
<div class="c l" style="left:530px;width:48px;background:#8df0c5;"></div>
<div class="c l" style="left:579px;width:46px;padding-left:1px;background:#8df0c5;">08:30</div>
<div class="c l" style="left:626px;width:47px;padding-left:1px;background:#f4b183;">08:00</div>
<div class="c l" style="left:674px;width:37px;background:#cbe3ee;"></div>
<div class="c l" style="left:712px;width:126px;"></div>
<div class="c r" style="left:839px;width:63px;">10</div>
<div class="c r" style="left:903px;width:63px;">0</div>
</div>
<div class="gr" style="top:304px">
<div class="c l" style="left:0px;width:27px;padding-left:1px;background:#cbe3ee;">D</div>
<div class="c l" style="left:28px;width:78px;">23/12/2014</div>
<div class="c r" style="left:107px;width:49px;">10</div>
<div class="c r" style="left:157px;width:46px;">15</div>
<div class="c l" style="left:204px;width:53px;letter-spacing:-0.2px;padding-left:1px;background:#d6c6c6;">CAJ 232</div>
<div class="c l" style="left:258px;width:47px;">232</div>
<div class="c l" style="left:306px;width:34px;letter-spacing:-0.4px;">PNR</div>
<div class="c l" style="left:341px;width:188px;letter-spacing:-0.6px;">POINTE NOIRE</div>
<div class="c l" style="left:530px;width:48px;background:#8df0c5;"></div>
<div class="c l" style="left:579px;width:46px;padding-left:1px;background:#8df0c5;">08:45</div>
<div class="c l" style="left:626px;width:47px;padding-left:1px;background:#f4b183;">08:15</div>
<div class="c l" style="left:674px;width:37px;background:#cbe3ee;"></div>
<div class="c l" style="left:712px;width:126px;"></div>
<div class="c r" style="left:839px;width:63px;">10</div>
<div class="c r" style="left:903px;width:63px;">15</div>
</div>
<div class="gr" style="top:323px">
<div class="c l" style="left:0px;width:27px;padding-left:1px;background:#cbe3ee;">D</div>
<div class="c l" style="left:28px;width:78px;">23/12/2014</div>
<div class="c r" style="left:107px;width:49px;">10</div>
<div class="c r" style="left:157px;width:46px;">30</div>
<div class="c l" style="left:204px;width:53px;letter-spacing:-0.2px;padding-left:1px;background:#d6c6c6;">Q8 0222</div>
<div class="c l" style="left:258px;width:47px;">0222</div>
<div class="c l" style="left:306px;width:34px;letter-spacing:-0.4px;">DIS</div>
<div class="c l" style="left:341px;width:188px;letter-spacing:-0.6px;">DOLISIE</div>
<div class="c l" style="left:530px;width:48px;background:#8df0c5;"></div>
<div class="c l" style="left:579px;width:46px;padding-left:1px;background:#8df0c5;">09:00</div>
<div class="c l" style="left:626px;width:47px;padding-left:1px;background:#f4b183;">08:30</div>
<div class="c l" style="left:674px;width:37px;background:#cbe3ee;"></div>
<div class="c l" style="left:712px;width:126px;"></div>
<div class="c r" style="left:839px;width:63px;">10</div>
<div class="c r" style="left:903px;width:63px;">30</div>
</div>
<div class="gr" style="top:342px">
<div class="c l" style="left:0px;width:27px;padding-left:1px;background:#cbe3ee;">D</div>
<div class="c l" style="left:28px;width:78px;">23/12/2014</div>
<div class="c r" style="left:107px;width:49px;">11</div>
<div class="c r" style="left:157px;width:46px;">15</div>
<div class="c l" style="left:204px;width:53px;letter-spacing:-0.2px;padding-left:1px;background:#d6c6c6;">LC 0105</div>
<div class="c l" style="left:258px;width:47px;">0105</div>
<div class="c l" style="left:306px;width:34px;letter-spacing:-0.4px;">PNR</div>
<div class="c l" style="left:341px;width:188px;letter-spacing:-0.6px;">POINTE NOIRE</div>
<div class="c l" style="left:530px;width:48px;background:#8df0c5;"></div>
<div class="c l" style="left:579px;width:46px;padding-left:1px;background:#8df0c5;">09:45</div>
<div class="c l" style="left:626px;width:47px;padding-left:1px;background:#f4b183;">09:15</div>
<div class="c l" style="left:674px;width:37px;background:#cbe3ee;"></div>
<div class="c l" style="left:712px;width:126px;"></div>
<div class="c r" style="left:839px;width:63px;">11</div>
<div class="c r" style="left:903px;width:63px;">15</div>
</div>
<div class="gr" style="top:361px">
<div class="c l" style="left:0px;width:27px;padding-left:1px;background:#cbe3ee;">D</div>
<div class="c l" style="left:28px;width:78px;">23/12/2014</div>
<div class="c r" style="left:107px;width:49px;">11</div>
<div class="c r" style="left:157px;width:46px;">15</div>
<div class="c l" style="left:204px;width:53px;letter-spacing:-0.2px;padding-left:1px;background:#d6c6c6;">LC 0011</div>
<div class="c l" style="left:258px;width:47px;">0011</div>
<div class="c l" style="left:306px;width:34px;letter-spacing:-0.4px;">CDG</div>
<div class="c l" style="left:341px;width:188px;letter-spacing:-0.6px;">PARIS-CDG</div>
<div class="c l" style="left:530px;width:48px;background:#8df0c5;"></div>
<div class="c l" style="left:579px;width:46px;padding-left:1px;background:#8df0c5;">09:45</div>
<div class="c l" style="left:626px;width:47px;padding-left:1px;background:#f4b183;">09:15</div>
<div class="c l" style="left:674px;width:37px;background:#cbe3ee;"></div>
<div class="c l" style="left:712px;width:126px;"></div>
<div class="c r" style="left:839px;width:63px;">11</div>
<div class="c r" style="left:903px;width:63px;">15</div>
</div>
<div class="gr" style="top:380px">
<div class="c l" style="left:0px;width:27px;padding-left:1px;background:#cbe3ee;">A</div>
<div class="c l" style="left:28px;width:78px;">23/12/2014</div>
<div class="c r" style="left:107px;width:49px;">11</div>
<div class="c r" style="left:157px;width:46px;">45</div>
<div class="c l" style="left:204px;width:53px;letter-spacing:-0.2px;padding-left:1px;background:#d6c6c6;">Q8 0271</div>
<div class="c l" style="left:258px;width:47px;">0271</div>
<div class="c l" style="left:306px;width:34px;letter-spacing:-0.4px;">PNR</div>
<div class="c l" style="left:341px;width:188px;letter-spacing:-0.6px;">POINTE NOIRE</div>
<div class="c l" style="left:530px;width:48px;background:#8df0c5;"></div>
<div class="c l" style="left:579px;width:46px;padding-left:1px;background:#8df0c5;">10:15</div>
<div class="c l" style="left:626px;width:47px;padding-left:1px;background:#f4b183;">09:45</div>
<div class="c l" style="left:674px;width:37px;background:#cbe3ee;"></div>
<div class="c l" style="left:712px;width:126px;"></div>
<div class="c r" style="left:839px;width:63px;">11</div>
<div class="c r" style="left:903px;width:63px;">45</div>
</div>
<div class="gr" style="top:399px">
<div class="c l" style="left:0px;width:27px;padding-left:1px;background:#cbe3ee;">A</div>
<div class="c l" style="left:28px;width:78px;">23/12/2014</div>
<div class="c r" style="left:107px;width:49px;">12</div>
<div class="c r" style="left:157px;width:46px;">10</div>
<div class="c l" style="left:204px;width:53px;letter-spacing:-0.2px;padding-left:1px;background:#d6c6c6;">LC 0106</div>
<div class="c l" style="left:258px;width:47px;">0106</div>
<div class="c l" style="left:306px;width:34px;letter-spacing:-0.4px;">PNR</div>
<div class="c l" style="left:341px;width:188px;letter-spacing:-0.6px;">POINTE NOIRE</div>
<div class="c l" style="left:530px;width:48px;background:#8df0c5;"></div>
<div class="c l" style="left:579px;width:46px;padding-left:1px;background:#8df0c5;">10:40</div>
<div class="c l" style="left:626px;width:47px;padding-left:1px;background:#f4b183;">10:10</div>
<div class="c l" style="left:674px;width:37px;background:#cbe3ee;"></div>
<div class="c l" style="left:712px;width:126px;"></div>
<div class="c r" style="left:839px;width:63px;">12</div>
<div class="c r" style="left:903px;width:63px;">10</div>
</div>
<div class="gr" style="top:418px">
<div class="c l" style="left:0px;width:27px;padding-left:1px;background:#cbe3ee;">D</div>
<div class="c l" style="left:28px;width:78px;">23/12/2014</div>
<div class="c r" style="left:107px;width:49px;">12</div>
<div class="c r" style="left:157px;width:46px;">30</div>
<div class="c l" style="left:204px;width:53px;letter-spacing:-0.2px;padding-left:1px;background:#d6c6c6;">Q8 0272</div>
<div class="c l" style="left:258px;width:47px;">0272</div>
<div class="c l" style="left:306px;width:34px;letter-spacing:-0.4px;">PNR</div>
<div class="c l" style="left:341px;width:188px;letter-spacing:-0.6px;">POINTE NOIRE</div>
<div class="c l" style="left:530px;width:48px;background:#8df0c5;"></div>
<div class="c l" style="left:579px;width:46px;padding-left:1px;background:#8df0c5;">11:00</div>
<div class="c l" style="left:626px;width:47px;padding-left:1px;background:#f4b183;">10:30</div>
<div class="c l" style="left:674px;width:37px;background:#cbe3ee;"></div>
<div class="c l" style="left:712px;width:126px;"></div>
<div class="c r" style="left:839px;width:63px;">12</div>
<div class="c r" style="left:903px;width:63px;">30</div>
</div>
<div class="gr" style="top:437px">
<div class="c l" style="left:0px;width:27px;padding-left:1px;background:#cbe3ee;">A</div>
<div class="c l" style="left:28px;width:78px;">23/12/2014</div>
<div class="c r" style="left:107px;width:49px;">12</div>
<div class="c r" style="left:157px;width:46px;">45</div>
<div class="c l" style="left:204px;width:53px;letter-spacing:-0.2px;padding-left:1px;background:#d6c6c6;">ET 0831</div>
<div class="c l" style="left:258px;width:47px;">0831</div>
<div class="c l" style="left:306px;width:34px;letter-spacing:-0.4px;">ADD</div>
<div class="c l" style="left:341px;width:188px;letter-spacing:-0.6px;">ADDIS ABABA</div>
<div class="c l" style="left:530px;width:48px;background:#8df0c5;"></div>
<div class="c l" style="left:579px;width:46px;padding-left:1px;background:#8df0c5;">11:15</div>
<div class="c l" style="left:626px;width:47px;padding-left:1px;background:#f4b183;">10:45</div>
<div class="c l" style="left:674px;width:37px;background:#cbe3ee;"></div>
<div class="c l" style="left:712px;width:126px;"></div>
<div class="c r" style="left:839px;width:63px;">12</div>
<div class="c r" style="left:903px;width:63px;">45</div>
</div>
<div class="gr" style="top:456px">
<div class="c l" style="left:0px;width:27px;padding-left:1px;background:#cbe3ee;">A</div>
<div class="c l" style="left:28px;width:78px;">23/12/2014</div>
<div class="c r" style="left:107px;width:49px;">13</div>
<div class="c r" style="left:157px;width:46px;">00</div>
<div class="c l" style="left:204px;width:53px;letter-spacing:-0.2px;padding-left:1px;background:#d6c6c6;">QC 0351</div>
<div class="c l" style="left:258px;width:47px;">0351</div>
<div class="c l" style="left:306px;width:34px;letter-spacing:-0.4px;">DLA</div>
<div class="c l" style="left:341px;width:188px;letter-spacing:-0.6px;">DOUALA</div>
<div class="c l" style="left:530px;width:48px;background:#8df0c5;"></div>
<div class="c l" style="left:579px;width:46px;padding-left:1px;background:#8df0c5;">11:30</div>
<div class="c l" style="left:626px;width:47px;padding-left:1px;background:#f4b183;">11:00</div>
<div class="c l" style="left:674px;width:37px;background:#cbe3ee;"></div>
<div class="c l" style="left:712px;width:126px;"></div>
<div class="c r" style="left:839px;width:63px;">13</div>
<div class="c r" style="left:903px;width:63px;">0</div>
</div>
<div class="gr" style="top:475px">
<div class="c l" style="left:0px;width:27px;padding-left:1px;background:#cbe3ee;"></div>
<div class="c l" style="left:28px;width:78px;"></div>
<div class="c r" style="left:107px;width:49px;"></div>
<div class="c r" style="left:157px;width:46px;"></div>
<div class="c l" style="left:204px;width:53px;letter-spacing:-0.2px;padding-left:1px;background:#d6c6c6;"></div>
<div class="c l" style="left:258px;width:47px;"></div>
<div class="c l" style="left:306px;width:34px;letter-spacing:-0.4px;"></div>
<div class="c l" style="left:341px;width:188px;letter-spacing:-0.6px;"></div>
<div class="c l" style="left:530px;width:48px;background:#8df0c5;"></div>
<div class="c l" style="left:579px;width:46px;padding-left:1px;background:#8df0c5;"></div>
<div class="c l" style="left:626px;width:47px;padding-left:1px;background:#f4b183;"></div>
<div class="c l" style="left:674px;width:37px;background:#cbe3ee;"></div>
<div class="c l" style="left:712px;width:126px;"></div>
<div class="c r" style="left:839px;width:63px;"></div>
<div class="c r" style="left:903px;width:63px;"></div>
</div>
</div>
<!-- scrollbar -->
<div class="abs" style="left:1254px;top:216px;width:16px;height:477px;background:linear-gradient(90deg,#e8e8e8 0,#f0f0f0 20%,#f4f4f4 100%)"></div>
<div class="abs" style="left:1254px;top:234px;width:15px;height:93px;border:1px solid #a6a6a6;border-radius:2px;background:linear-gradient(90deg,#f4f4f4 0,#eaeaea 45%,#dadada 55%,#dedede 100%);box-shadow:inset 0 0 0 1px #fafafa"></div>
<div class="abs" style="left:1258px;top:276px;width:8px;height:1px;background:#606060;box-shadow:0 2px 0 #606060,0 4px 0 #606060,0 6px 0 #606060"></div>
<svg class="abs" style="left:1253px;top:216px" width="18" height="477" viewBox="0 0 18 477">
 <path d="M5.300 11.200 L13.100 11.200 L9.200 6.800 Z" fill="#303030"/>
 <path d="M6 467.200 L13 467.200 L9.500 470.800 Z" fill="#303030"/>
</svg>
<!-- status bar -->
<div class="abs" style="left:8px;top:695px;width:1264px;height:17px;background:#f0eeee;border-top:1px solid #8c8c8c;box-shadow:inset 0 1px 0 #fff"></div>
<div class="abs" style="left:157px;top:698px;width:1px;height:13px;background:#d0d0d0"></div>
<div class="abs" style="left:158px;top:698px;width:1px;height:13px;background:#fff"></div>
<svg class="abs" style="left:1261px;top:701px" width="11" height="11" viewBox="0 0 11 11">
 <g fill="#fff"><rect x="8" y="8" width="2" height="2"/><rect x="8" y="5" width="2" height="2"/><rect x="8" y="2" width="2" height="2"/><rect x="5" y="8" width="2" height="2"/><rect x="5" y="5" width="2" height="2"/><rect x="2" y="8" width="2" height="2"/></g>
 <g fill="#b4b0b0"><rect x="7.500" y="7.500" width="1.500" height="1.500"/><rect x="7.500" y="4.500" width="1.500" height="1.500"/><rect x="7.500" y="1.500" width="1.500" height="1.500"/><rect x="4.500" y="7.500" width="1.500" height="1.500"/><rect x="4.500" y="4.500" width="1.500" height="1.500"/><rect x="1.500" y="7.500" width="1.500" height="1.500"/></g>
</svg>
<!-- context menu -->
<div class="abs" id="cmenu" style="left:563px;top:240px;width:230px;height:110px;background:#f1f1f1;border:1px solid #979797;box-shadow:3px 3px 4px rgba(0,0,0,.45);z-index:10">
 <div class="abs" style="left:29px;top:2px;width:1px;height:104px;background:#e0e0e0"></div>
 <div class="abs" style="left:30px;top:2px;width:1px;height:104px;background:#fff"></div>
 <div class="abs" style="left:31px;top:50px;width:194px;height:1px;background:#d8d8d8"></div>
 <div class="abs" style="left:31px;top:51px;width:194px;height:1px;background:#fff"></div>
 <div class="abs" style="left:31px;top:80px;width:194px;height:1px;background:#d8d8d8"></div>
 <div class="abs" style="left:31px;top:81px;width:194px;height:1px;background:#fff"></div>
 <div class="t mi" id="m1" style="letter-spacing:.13px;left:34px;top:6px">Ajouter information de vol</div>
 <div class="t mi" id="m2" style="left:34px;top:28px">Effacer information de vol</div>
 <div class="t mi" id="m3" style="letter-spacing:-.14px;left:34px;top:58px">Affecter une ressource</div>
 <div class="t mi" id="m4" style="letter-spacing:-.1px;left:34px;top:88px;color:#8a8a8a">Valider le vol</div>
</div>

</div></div>
</body>
</html>
